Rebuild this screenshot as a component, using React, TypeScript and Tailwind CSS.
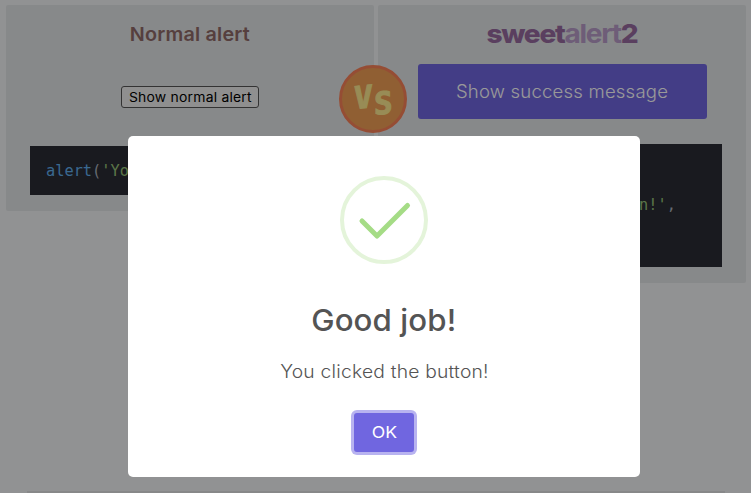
import type { ReactNode } from 'react';

function Code({ children, className }: { children: ReactNode; className: string }) {
  return (
    <pre
      className={`overflow-hidden bg-[#2a2c34] p-4 font-['DejaVu_Sans_Mono',monospace] text-[15.3px] leading-[18.2px] text-[#abb2bf] ${className}`}
    >
      {children}
    </pre>
  );
}

const Str = ({ children }: { children: ReactNode }) => <span className="text-[#98c379]">{children}</span>;
const Fn = ({ children }: { children: ReactNode }) => <span className="text-[#61afef]">{children}</span>;

function VersusBadge() {
  return (
    <div className="absolute left-[339px] top-[65px] flex h-[68px] w-[68px] items-center justify-center gap-[2px] rounded-full border-[3px] border-[#f98058] bg-[#f09e56] font-['DejaVu_Sans_Mono',monospace] text-[31px] leading-none font-bold text-[#fdea90]">
      <span className="w-[18px] -translate-y-[2px] -skew-y-6 [-webkit-text-stroke:1px_#fdea90]">V</span>
      <span className="w-[18px] translate-y-[4px] -skew-y-6 [-webkit-text-stroke:1px_#fdea90]">S</span>
    </div>
  );
}

function Comparison() {
  return (
    <div className="relative flex items-start gap-1 pl-1.5 pt-[5px]">
      <section className="flex h-[206px] w-[368px] flex-col items-center rounded-[2px] bg-[#e2e4e6] px-6">
        <h3 className="mt-[18px] h-6 scale-x-[1.04] whitespace-nowrap text-[19px] leading-6 font-semibold tracking-[0.2px] text-[#8f6a68]">
          Normal alert
        </h3>
        <button className="mt-[39px] h-[22px] w-[138px] whitespace-nowrap rounded-[3px] border border-[#555] bg-[#efefef] text-[13px] leading-5 text-black">
          <span className="inline-block scale-x-[1.07] tracking-[0.2px]">Show normal alert</span>
        </button>
        <Code className="mt-[38px] h-[49px] w-full">
          <Fn>alert</Fn>(<Str>'You clicked the button!'</Str>)
        </Code>
      </section>
      <section className="flex h-[278px] w-[368px] flex-col items-center rounded-[2px] bg-[#e2e4e6] px-6">
        <div className="mt-[15px] h-7 scale-x-[1.08] whitespace-nowrap text-[26px] leading-7 font-extrabold tracking-[-1.2px] text-[#96699f]">
          sweet<span className="font-bold text-[#b79cc8]">alert</span>2
        </div>
        <button className="mt-[16px] h-[55px] w-[289px] whitespace-nowrap rounded-[3px] bg-[#7066e0] text-[18px] text-white">
          <span className="inline-block scale-x-[1.03] font-light tracking-[0.2px]">Show success message</span>
        </button>
        <Code className="mt-[25px] h-[123px] w-full">
          Swal.<Fn>fire</Fn>({'\n  '}
          <Str>'Good job!'</Str>,{'\n  '}
          <Str>'You clicked the button!'</Str>,{'\n  '}
          <Str>'success'</Str>
          {'\n'})
        </Code>
      </section>
      <VersusBadge />
    </div>
  );
}

function SuccessDialog() {
  return (
    <div role="dialog" className="mt-[136px] ml-32 flex h-[341px] w-[512px] flex-col items-center rounded-[5px] bg-white">
      <svg className="mt-10 h-[88px] w-[88px]" viewBox="0 0 88 88" fill="none">
        <circle cx="44" cy="44" r="42" stroke="#e4f4da" strokeWidth="4" />
        <path d="M22 45L37 60L67.5 29.5" stroke="#a5dc86" strokeWidth="5" strokeLinecap="round" strokeLinejoin="round" />
      </svg>
      <h2 className="mt-9 scale-x-[1.04] whitespace-nowrap text-[30px] leading-[40px] font-medium tracking-[0.1px] text-[#545454]">
        Good job!
      </h2>
      <p className="mt-[21px] scale-x-[1.07] whitespace-nowrap text-[18px] leading-[22px] font-light tracking-[0.2px] text-[#545454]">
        You clicked the button!
      </p>
      <button className="mt-[30px] h-[39px] w-[60px] rounded-[3px] bg-[#7066e0] pb-0.5 text-[16px] text-white ring-[3px] ring-[#b8b3f0]">
        <span className="inline-block scale-x-[1.1]">OK</span>
      </button>
    </div>
  );
}

export default function App() {
  return (
    <div className="relative flex h-[493px] w-[751px] flex-col justify-between overflow-hidden bg-[#f2f3f5] font-['Inter',sans-serif]">
      <Comparison />
      <div className="ml-[27px] h-[2px] w-[698px] bg-[#e2e3e5]" />
      <div className="absolute inset-0 bg-black/40">
        <SuccessDialog />
      </div>
    </div>
  );
}
